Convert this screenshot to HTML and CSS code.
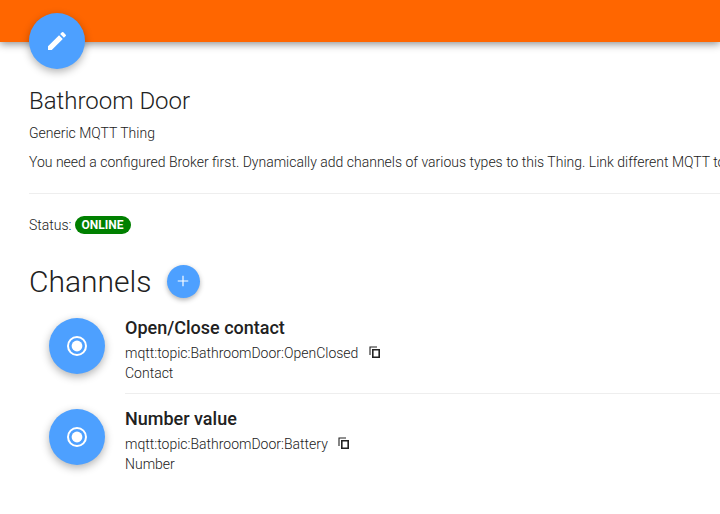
FILE: index.html
```html
<!DOCTYPE html>
<html lang="en">
<head>
<meta charset="utf-8">
<title>Bathroom Door</title>
<link rel="stylesheet" href="styles.css">
</head>
<body>
<header class="topbar">
  <button class="fab fab-edit" aria-label="Edit">
    <svg viewBox="0 0 24 24" width="24" height="24"><path fill="#fff" d="M3 17.25V21h3.75L17.81 9.94l-3.75-3.75L3 17.25zM20.71 7.04a1 1 0 0 0 0-1.41l-2.34-2.34a1 1 0 0 0-1.41 0l-1.83 1.83 3.75 3.75 1.83-1.83z"/></svg>
  </button>
</header>
<main class="content">
  <h1 class="title">Bathroom Door</h1>
  <p class="subtitle">Generic MQTT Thing</p>
  <p class="desc">You need a configured Broker first. Dynamically add channels of various types to this Thing. Link different MQTT to</p>
  <hr class="rule">
  <p class="status">Status: <span class="badge">ONLINE</span></p>
  <div class="channels-head">
    <h2 class="channels-title">Channels</h2>
    <button class="fab-small" aria-label="Add channel">
      <svg viewBox="0 0 24 24" width="14" height="14"><path fill="none" stroke="#fff" stroke-width="2" d="M12 3v18M3 12h18"/></svg>
    </button>
  </div>
  <ul class="channel-list">
    <li class="channel">
      <span class="channel-icon">
        <svg viewBox="0 0 24 24" width="24" height="24"><circle cx="12" cy="12" r="9" fill="none" stroke="#fff" stroke-width="2"/><circle cx="12" cy="12" r="5.4" fill="#fff"/></svg>
      </span>
      <div class="channel-body">
        <div class="channel-name">Open/Close contact</div>
        <div class="channel-uid">mqtt:topic:BathroomDoor:OpenClosed
          <svg class="copy" viewBox="0 0 12 12" width="12" height="12"><path fill="none" stroke="#222" stroke-width="1.1" d="M1 9V1h7"/><path fill="none" stroke="#222" stroke-width="1.6" d="M3.8 3.8h6.4v7.4H3.8z"/></svg>
        </div>
        <div class="channel-type">Contact</div>
      </div>
    </li>
    <li class="channel">
      <span class="channel-icon">
        <svg viewBox="0 0 24 24" width="24" height="24"><circle cx="12" cy="12" r="9" fill="none" stroke="#fff" stroke-width="2"/><circle cx="12" cy="12" r="5.4" fill="#fff"/></svg>
      </span>
      <div class="channel-body">
        <div class="channel-name">Number value</div>
        <div class="channel-uid">mqtt:topic:BathroomDoor:Battery
          <svg class="copy" viewBox="0 0 12 12" width="12" height="12"><path fill="none" stroke="#222" stroke-width="1.1" d="M1 9V1h7"/><path fill="none" stroke="#222" stroke-width="1.6" d="M3.8 3.8h6.4v7.4H3.8z"/></svg>
        </div>
        <div class="channel-type">Number</div>
      </div>
    </li>
  </ul>
</main>
</body>
</html>
```
FILE: styles.css
```css
* { box-sizing: border-box; }
html, body { margin: 0; height: 100%; overflow: hidden; background: #fff; }
body { font-family: Roboto, sans-serif; font-size: 14px; font-weight: 300; color: #212121; }
button { border: 0; padding: 0; cursor: pointer; font: inherit; }

.topbar {
  height: 42px;
  background: #ff6600;
  box-shadow: 0 2px 8px rgba(0,0,0,.45);
  padding: 13px 0 0 29px;
}
.fab {
  width: 56px; height: 56px; border-radius: 50%;
  background: #4da0ff;
  display: flex; align-items: center; justify-content: center;
  box-shadow: 0 3px 8px rgba(0,0,0,.3);
}
.content { padding: 0 0 0 29px; width: 1100px; }
.title { margin: 45px 0 0; font-size: 24px; line-height: 28px; font-weight: 300; }
.subtitle { margin: 8px 0 0; line-height: 20px; }
.desc { margin: 9px 0 0; line-height: 20px; white-space: nowrap; }
.rule { margin: 21px 0 0; border: 0; border-top: 1px solid #eeeeee; }
.status { margin: 21px 0 0; line-height: 20px; display: flex; align-items: center; gap: 3px; }
.badge {
  background: #008000; color: #fff; font-size: 12px; font-weight: 700;
  height: 18px; line-height: 18px; padding: 0 7px; border-radius: 9px;
}
.channels-head { margin-top: 19px; display: flex; align-items: center; gap: 15px; height: 56px; }
.channels-title { margin: 0; font-size: 30px; font-weight: 300; line-height: 36px; }
.fab-small {
  width: 33px; height: 33px; border-radius: 50%;
  background: #4da0ff;
  display: flex; align-items: center; justify-content: center;
  box-shadow: 0 2px 5px rgba(0,0,0,.3);
  margin-top: -2px;
}
.channel-list { list-style: none; margin: -3px 0 0; padding: 0; }
.channel { display: flex; height: 91px; }
.channel-icon {
  flex: none; width: 56px; height: 56px; border-radius: 50%;
  margin: 11px 20px 0 20px;
  background: #4da0ff;
  display: flex; align-items: center; justify-content: center;
  box-shadow: 0 3px 8px rgba(0,0,0,.3);
}
.channel-body { flex: 1; height: 87px; padding-top: 10px; border-bottom: 1px solid #eeeeee; }
.channel:last-child .channel-body { border-bottom: 0; }
.channel-name { font-size: 18px; font-weight: 500; line-height: 22px; }
.channel-uid { margin-top: 4px; line-height: 20px; }
.channel-type { line-height: 20px; }
.copy { margin-left: 7px; vertical-align: 0; }
```
